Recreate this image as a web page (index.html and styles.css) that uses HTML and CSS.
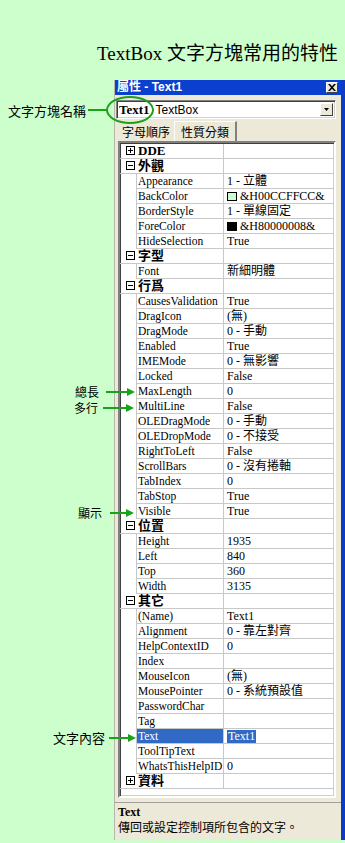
FILE: index.html
```html
<!DOCTYPE html>
<html lang="zh-Hant">
<head>
<meta charset="utf-8">
<title>TextBox 文字方塊常用的特性</title>
<link rel="stylesheet" href="styles.css">
</head>
<body>
<h1 class="heading">TextBox 文字方塊常用的特性</h1>

<div class="window">
  <div class="titlebar">
    <span class="title">屬性 - Text1</span>
    <span class="close"><svg width="8" height="7" viewBox="0 0 8 7"><path d="M0 0h2l2 2.2L6 0h2L5 3.5 8 7H6L4 4.8 2 7H0l3-3.5z" fill="#000"/></svg></span>
  </div>
  <div class="body">
    <div class="combo">
      <span class="obj"><b class="objname">Text1</b><span class="objtype">TextBox</span></span>
      <span class="ddbtn"><svg width="5" height="3" viewBox="0 0 5 3"><path d="M0 0h5L2.5 3z" fill="#000"/></svg></span>
    </div>
    <div class="tabs">
      <span class="tab">字母順序</span>
      <span class="tab active">性質分類</span>
    </div>
    <div class="grid">
      <div class="row cat"><span class="tog plus"></span><span class="cname">DDE</span><span class="val"></span></div>
      <div class="row cat"><span class="tog minus"></span><span class="cname">外觀</span><span class="val"></span></div>
      <div class="row"><span class="m"></span><span class="name">Appearance</span><span class="val">1 - 立體</span></div>
      <div class="row"><span class="m"></span><span class="name">BackColor</span><span class="val"><i class="sw green"></i>&amp;H00CCFFCC&amp;</span></div>
      <div class="row"><span class="m"></span><span class="name">BorderStyle</span><span class="val">1 - 單線固定</span></div>
      <div class="row"><span class="m"></span><span class="name">ForeColor</span><span class="val"><i class="sw black"></i>&amp;H80000008&amp;</span></div>
      <div class="row"><span class="m"></span><span class="name">HideSelection</span><span class="val">True</span></div>
      <div class="row cat"><span class="tog minus"></span><span class="cname">字型</span><span class="val"></span></div>
      <div class="row"><span class="m"></span><span class="name">Font</span><span class="val">新細明體</span></div>
      <div class="row cat"><span class="tog minus"></span><span class="cname">行爲</span><span class="val"></span></div>
      <div class="row"><span class="m"></span><span class="name">CausesValidation</span><span class="val">True</span></div>
      <div class="row"><span class="m"></span><span class="name">DragIcon</span><span class="val">(無)</span></div>
      <div class="row"><span class="m"></span><span class="name">DragMode</span><span class="val">0 - 手動</span></div>
      <div class="row"><span class="m"></span><span class="name">Enabled</span><span class="val">True</span></div>
      <div class="row"><span class="m"></span><span class="name">IMEMode</span><span class="val">0 - 無影響</span></div>
      <div class="row"><span class="m"></span><span class="name">Locked</span><span class="val">False</span></div>
      <div class="row"><span class="m"></span><span class="name">MaxLength</span><span class="val">0</span></div>
      <div class="row"><span class="m"></span><span class="name">MultiLine</span><span class="val">False</span></div>
      <div class="row"><span class="m"></span><span class="name">OLEDragMode</span><span class="val">0 - 手動</span></div>
      <div class="row"><span class="m"></span><span class="name">OLEDropMode</span><span class="val">0 - 不接受</span></div>
      <div class="row"><span class="m"></span><span class="name">RightToLeft</span><span class="val">False</span></div>
      <div class="row"><span class="m"></span><span class="name">ScrollBars</span><span class="val">0 - 沒有捲軸</span></div>
      <div class="row"><span class="m"></span><span class="name">TabIndex</span><span class="val">0</span></div>
      <div class="row"><span class="m"></span><span class="name">TabStop</span><span class="val">True</span></div>
      <div class="row"><span class="m"></span><span class="name">Visible</span><span class="val">True</span></div>
      <div class="row cat"><span class="tog minus"></span><span class="cname">位置</span><span class="val"></span></div>
      <div class="row"><span class="m"></span><span class="name">Height</span><span class="val">1935</span></div>
      <div class="row"><span class="m"></span><span class="name">Left</span><span class="val">840</span></div>
      <div class="row"><span class="m"></span><span class="name">Top</span><span class="val">360</span></div>
      <div class="row"><span class="m"></span><span class="name">Width</span><span class="val">3135</span></div>
      <div class="row cat"><span class="tog minus"></span><span class="cname">其它</span><span class="val"></span></div>
      <div class="row"><span class="m"></span><span class="name">(Name)</span><span class="val">Text1</span></div>
      <div class="row"><span class="m"></span><span class="name">Alignment</span><span class="val">0 - 靠左對齊</span></div>
      <div class="row"><span class="m"></span><span class="name">HelpContextID</span><span class="val">0</span></div>
      <div class="row"><span class="m"></span><span class="name">Index</span><span class="val"></span></div>
      <div class="row"><span class="m"></span><span class="name">MouseIcon</span><span class="val">(無)</span></div>
      <div class="row"><span class="m"></span><span class="name">MousePointer</span><span class="val">0 - 系統預設值</span></div>
      <div class="row"><span class="m"></span><span class="name">PasswordChar</span><span class="val"></span></div>
      <div class="row"><span class="m"></span><span class="name">Tag</span><span class="val"></span></div>
      <div class="row selected"><span class="m"></span><span class="name">Text</span><span class="val"><span class="hl">Text1</span></span></div>
      <div class="row"><span class="m"></span><span class="name">ToolTipText</span><span class="val"></span></div>
      <div class="row"><span class="m"></span><span class="name">WhatsThisHelpID</span><span class="val">0</span></div>
      <div class="row cat"><span class="tog plus"></span><span class="cname">資料</span><span class="val"></span></div>
    </div>
    <div class="desc">
      <div class="desc-title">Text</div>
      <div class="desc-text">傳回或設定控制項所包含的文字。</div>
    </div>
  </div>
</div>

<div class="callout c-name"><span class="label">文字方塊名稱</span><svg width="20" height="4" viewBox="0 0 20 4"><rect x="0" y="1" width="20" height="2" fill="#19a319"/></svg></div>
<div class="ring"></div>
<div class="callout c-max"><span class="label">總長</span><svg class="arrow" width="29" height="8" viewBox="0 0 29 8"><rect x="0" y="3" width="22" height="2" fill="#19a319"/><path d="M21 0l8 4-8 4z" fill="#19a319"/></svg></div>
<div class="callout c-multi"><span class="label">多行</span><svg class="arrow" width="31" height="8" viewBox="0 0 31 8"><rect x="0" y="3" width="24" height="2" fill="#19a319"/><path d="M23 0l8 4-8 4z" fill="#19a319"/></svg></div>
<div class="callout c-vis"><span class="label">顯示</span><svg class="arrow" width="24" height="8" viewBox="0 0 24 8"><rect x="0" y="3" width="17" height="2" fill="#19a319"/><path d="M16 0l8 4-8 4z" fill="#19a319"/></svg></div>
<div class="callout c-text"><span class="label">文字內容</span><svg class="arrow" width="27" height="8" viewBox="0 0 27 8"><rect x="0" y="3" width="20" height="2" fill="#19a319"/><path d="M19 0l8 4-8 4z" fill="#19a319"/></svg></div>
</body>
</html>
```

FILE: styles.css
```css
html, body {
  margin: 0;
  padding: 0;
}
body {
  width: 345px;
  height: 843px;
  overflow: hidden;
  position: relative;
  background: #ccffcc;
  font-family: "Liberation Serif", "Noto Sans CJK TC", serif;
  color: #000;
}

.heading {
  margin: 0;
  padding: 42px 0 0 97px;
  height: 24px;
  line-height: 24px;
  font-size: 19px;
  font-weight: normal;
  font-family: "Liberation Serif", "Noto Sans CJK TC", serif;
  white-space: nowrap;
}

.window {
  margin: 14px 0 0 114px;
  width: 231px;
  height: 760px;
  box-sizing: border-box;
  border-left: 1px solid #b9b7aa;
  border-right: 4px solid #0b3cc4;
  background: #ece9d8;
  display: flex;
  flex-direction: column;
}

.titlebar {
  height: 15px;
  background: #0b3fd0;
  color: #fff;
  display: flex;
  align-items: center;
  justify-content: space-between;
  padding: 0 3px 0 2px;
}
.title {
  font-family: "Liberation Sans", "Noto Sans CJK TC", sans-serif;
  font-weight: bold;
  font-size: 12px;
  line-height: 15px;
  white-space: nowrap;
}
.close {
  width: 12px;
  height: 11px;
  box-sizing: border-box;
  background: #ece9d8;
  border: 1px solid;
  border-color: #fff #404040 #404040 #fff;
  display: flex;
  align-items: center;
  justify-content: center;
}

.body {
  flex: 1;
  display: flex;
  flex-direction: column;
  padding: 5px 5px 0 1px;
}

.combo {
  height: 19px;
  box-sizing: border-box;
  background: #fff;
  border: 1px solid;
  border-color: #808080 #fff #fff #808080;
  box-shadow: inset 1px 1px 0 #404040, inset -1px -1px 0 #d4d0c8;
  display: flex;
  align-items: center;
  justify-content: space-between;
  padding: 0 2px 0 2px;
}
.obj {
  font-size: 12px;
  line-height: 15px;
  white-space: nowrap;
  display: flex;
  align-items: baseline;
}
.objname {
  font-family: "Liberation Serif", serif;
  font-weight: bold;
  font-size: 13px;
}
.objtype {
  font-family: "Liberation Sans", sans-serif;
  font-size: 12px;
  margin-left: 6px;
}
.ddbtn {
  width: 13px;
  height: 13px;
  box-sizing: border-box;
  background: #ece9d8;
  border: 1px solid;
  border-color: #fff #404040 #404040 #fff;
  display: flex;
  align-items: center;
  justify-content: center;
}

.tabs {
  height: 20px;
  margin: 2px 0 0 2px;
  display: flex;
  align-items: flex-end;
}
.tab {
  font-family: "Noto Sans CJK TC", sans-serif;
  font-size: 12px;
  line-height: 16px;
  height: 17px;
  padding: 0 4px;
  box-sizing: border-box;
  white-space: nowrap;
}
.tab.active {
  height: 20px;
  padding: 2px 6px 0;
  border-left: 1px solid #fff;
  border-top: 1px solid #fff;
  border-right: 2px solid #808080;
}

.grid {
  margin-left: 2px;
  background: #fff;
  border: 2px solid;
  border-color: #808080 #fff #fff #808080;
  box-shadow: inset 1px 1px 0 #404040, inset -1px -1px 0 #d4d0c8;
  padding: 1px 0 7px 0;
  font-size: 12px;
}

.row {
  display: grid;
  grid-template-columns: 16px 87px 1fr;
  height: 15px;
  box-sizing: border-box;
  line-height: 14px;
  white-space: nowrap;
}
.row .name,
.row .val {
  border-bottom: 1px solid #c8c8c8;
  overflow: hidden;
}
.row .name {
  border-left: 1px solid #c8c8c8;
  padding-left: 1px;
  font-family: "Liberation Serif", serif;
  font-size: 11.5px;
}
.row .val {
  border-left: 1px solid #c8c8c8;
  padding-left: 3px;
  font-family: "Liberation Serif", "Noto Sans CJK TC", serif;
  display: flex;
  align-items: center;
}
.row.cat {
  grid-template-columns: 103px 1fr;
}
.row.cat .tog {
  display: none;
}
.cname {
  grid-column: 1;
  font-family: "Liberation Serif", "Noto Sans CJK TC", serif;
  font-weight: bold;
  font-size: 13px;
  border-bottom: 1px solid #c8c8c8;
  padding-left: 18px;
  position: relative;
}
.row.cat .val {
  grid-column: 2;
}
.cname::before {
  content: "";
  position: absolute;
  left: 6px;
  top: 2px;
  width: 9px;
  height: 9px;
  box-sizing: border-box;
  border: 1px solid #000;
  background:
    linear-gradient(#000, #000) center / 5px 1px no-repeat,
    #fff;
}
.tog.plus + .cname::before {
  background:
    linear-gradient(#000, #000) center / 5px 1px no-repeat,
    linear-gradient(#000, #000) center / 1px 5px no-repeat,
    #fff;
}

.sw {
  display: inline-block;
  width: 10px;
  height: 9px;
  box-sizing: border-box;
  border: 1px solid #000;
  margin-right: 3px;
}
.sw.green { background: #ccffcc; }
.sw.black { background: #000; }

.row.selected .name {
  background: #316ac5;
  color: #fff;
}
.hl {
  background: #316ac5;
  color: #fff;
  padding: 0 1px;
  line-height: 13px;
}

.desc {
  margin: 4px -5px 0 -1px;
  height: 35px;
  border-top: 1px solid #a0a0a0;
  padding: 3px 3px 0;
  font-size: 12px;
}
.desc-title {
  font-family: "Liberation Serif", serif;
  font-weight: bold;
  line-height: 13px;
  height: 13px;
}
.desc-text {
  font-family: "Noto Sans CJK TC", sans-serif;
  line-height: 14px;
  margin-top: 1px;
}

.callout {
  position: absolute;
  display: flex;
  align-items: center;
  gap: 4px;
  height: 15px;
  font-family: "Noto Sans CJK TC", sans-serif;
  font-size: 13px;
  line-height: 15px;
  white-space: nowrap;
}
.c-name { left: 8px; top: 102px; gap: 2px; height: 16px; }
.c-max { left: 75px; top: 385px; gap: 7px; font-size: 12px; line-height: 14px; height: 14px; }
.c-multi { left: 74px; top: 401px; gap: 5px; font-size: 12px; line-height: 14px; height: 14px; }
.c-vis { left: 78px; top: 505px; gap: 8px; font-size: 12px; }
.c-text { left: 53px; top: 730px; gap: 4px; }

.ring {
  position: absolute;
  left: 106px;
  top: 96px;
  width: 48px;
  height: 28px;
  box-sizing: border-box;
  border: 2px solid #19a319;
  border-radius: 50%;
}
```
